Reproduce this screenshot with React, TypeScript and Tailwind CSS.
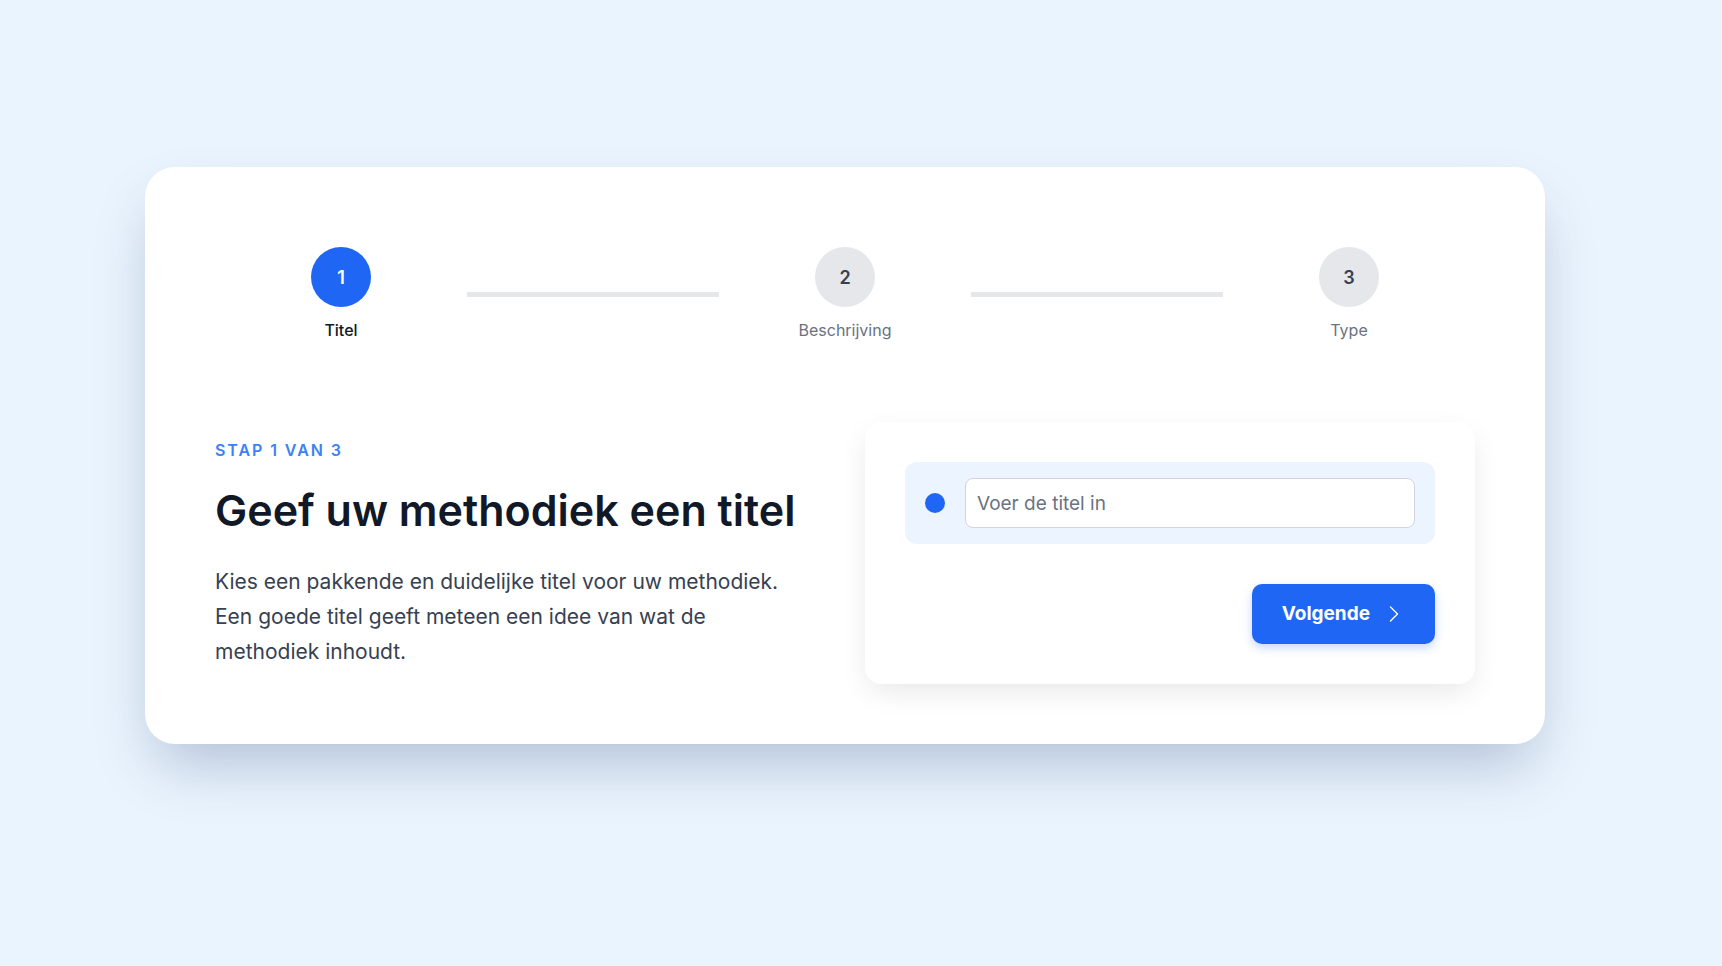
import React from "react";

const steps = [
  { n: 1, label: "Titel", active: true },
  { n: 2, label: "Beschrijving", active: false },
  { n: 3, label: "Type", active: false },
];

function Step({ n, label, active }: { n: number; label: string; active: boolean }) {
  return (
    <div className="flex w-[60px] flex-col items-center">
      <div
        className={
          active
            ? "flex h-[60px] w-[60px] items-center justify-center rounded-full bg-[#1f66f4] text-[18px] font-semibold text-white"
            : "flex h-[60px] w-[60px] items-center justify-center rounded-full bg-[#e5e7eb] text-[18px] font-semibold text-[#374151]"
        }
      >
        {n}
      </div>
      <p
        className={
          active
            ? "mt-[11px] whitespace-nowrap text-[16px] leading-6 font-medium text-[#111827]"
            : "mt-[11px] whitespace-nowrap text-[16px] leading-6 text-[#6b7280]"
        }
      >
        {label}
      </p>
    </div>
  );
}

export default function App() {
  return (
    <div
      className="min-h-screen bg-[#eaf4fe] pl-[145px] pt-[167px] pb-[223px]"
      style={{ fontFamily: "Inter, 'Noto Sans', sans-serif" }}
    >
      <div className="w-[1400px] rounded-[30px] bg-white px-[70px] pt-[80px] pb-[60px] shadow-[0_30px_60px_-12px_rgba(30,55,100,0.28)]">
        {/* stepper */}
        <div className="flex items-center px-24">
          <Step {...steps[0]} />
          <div className="mx-24 h-[5px] flex-1 bg-[#e5e7eb]" />
          <Step {...steps[1]} />
          <div className="mx-24 h-[5px] flex-1 bg-[#e5e7eb]" />
          <Step {...steps[2]} />
        </div>

        <div className="mt-[80px] grid grid-cols-2 items-center gap-10">
          <div>
            <p className="text-[16px] leading-6 font-semibold tracking-[0.12em] text-[#3b82f6]">STAP 1 VAN 3</p>
            <h1 className="mt-[22px] text-[43px] leading-[52px] font-semibold text-[#111827]">
              Geef uw methodiek een titel
            </h1>
            <p className="mt-[28px] max-w-[580px] text-[21px] leading-[35px] text-[#374151]">
              Kies een pakkende en duidelijke titel voor uw methodiek. Een goede titel geeft meteen een idee van wat de methodiek inhoudt.
            </p>
          </div>

          <div className="rounded-2xl bg-white p-10 shadow-[0_10px_30px_-4px_rgba(0,0,0,0.10)]">
            <div className="flex items-center gap-5 rounded-xl bg-[#ecf4ff] px-5 py-4">
              <span className="h-5 w-5 shrink-0 rounded-full bg-[#1f66f4]" />
              <input
                type="text"
                placeholder="Voer de titel in"
                className="h-[50px] flex-1 rounded-lg border border-[#d1d5db] bg-white px-[11px] text-[19px] text-[#111827] placeholder:text-[#6b7280] outline-none"
              />
            </div>
            <div className="mt-10 flex justify-end">
              <button className="flex h-[60px] items-center gap-[19px] rounded-[10px] bg-[#1f66f4] pl-[30px] pr-[36px] text-[19px] font-bold text-white shadow-[0_4px_10px_rgba(31,102,244,0.25)]">
                Volgende
                <svg width="10" height="16" viewBox="0 0 10 16" fill="none">
                  <polyline points="1.5,1 8.5,8 1.5,15" stroke="white" strokeWidth="1.4" strokeLinecap="round" strokeLinejoin="round" />
                </svg>
              </button>
            </div>
          </div>
        </div>
      </div>
    </div>
  );
}
